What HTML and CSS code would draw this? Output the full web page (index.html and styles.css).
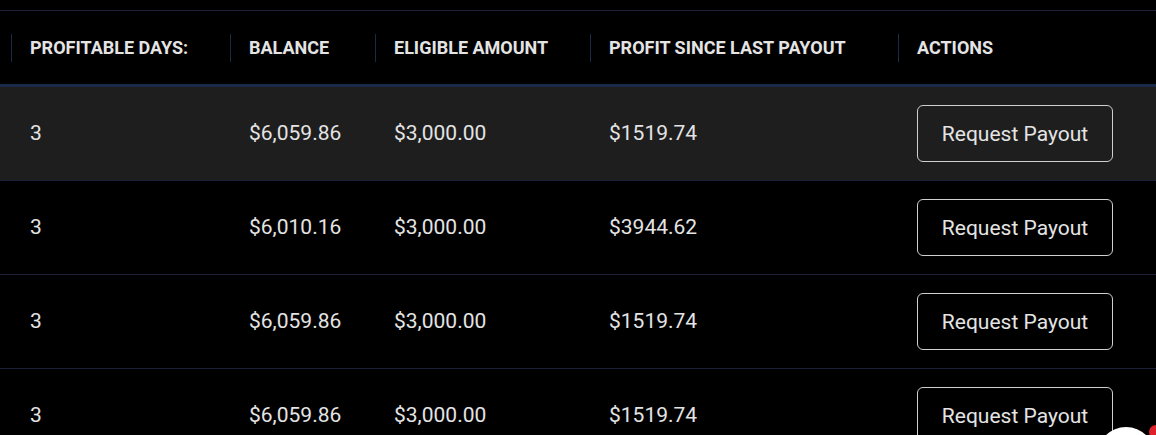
FILE: index.html
```html
<!DOCTYPE html>
<html lang="en">
<head>
  <meta charset="UTF-8">
  <meta name="viewport" content="width=device-width, initial-scale=1">
  <title>Payouts</title>
  <link rel="stylesheet" href="styles.css">
</head>
<body>

  <div class="payouts">
    <div class="row head">
      <div class="cell">Profitable Days:</div>
      <div class="cell">Balance</div>
      <div class="cell">Eligible Amount</div>
      <div class="cell">Profit Since Last Payout</div>
      <div class="cell">Actions</div>
    </div>

    <div class="row hover">
      <div class="cell">3</div>
      <div class="cell">$6,059.86</div>
      <div class="cell">$3,000.00</div>
      <div class="cell">$1519.74</div>
      <div class="cell"><button class="btn">Request Payout</button></div>
    </div>

    <div class="row">
      <div class="cell">3</div>
      <div class="cell">$6,010.16</div>
      <div class="cell">$3,000.00</div>
      <div class="cell">$3944.62</div>
      <div class="cell"><button class="btn">Request Payout</button></div>
    </div>

    <div class="row">
      <div class="cell">3</div>
      <div class="cell">$6,059.86</div>
      <div class="cell">$3,000.00</div>
      <div class="cell">$1519.74</div>
      <div class="cell"><button class="btn">Request Payout</button></div>
    </div>

    <div class="row">
      <div class="cell">3</div>
      <div class="cell">$6,059.86</div>
      <div class="cell">$3,000.00</div>
      <div class="cell">$1519.74</div>
      <div class="cell"><button class="btn">Request Payout</button></div>
    </div>
  </div>

  <!-- chat launcher peeking in from the corner -->
  <div class="chat">
    <span class="chat-dot"></span>
  </div>

</body>
</html>
```

FILE: styles.css
```css
:root {
  --bg: #000;
  --hover: #1e1e1e;
  --text: #e4e4e4;
  --line: #1a2038;
  --line-strong: #1c2a4a;
  --font: "Roboto", "Liberation Sans", sans-serif;
}
*, *::before, *::after { box-sizing: border-box; margin:0; padding:0; }
html, body { height:100%; background:var(--bg); color:var(--text); font:21px/1.2 var(--font); overflow:hidden; }

.payouts { padding-top:10px; }
.row {
  display:grid;
  grid-template-columns: 230px 145px 215px 308px 1fr;
  align-items:center;
  height:94px;
  border-bottom:1px solid var(--line);
}
.row .cell { padding-left:30px; }
.row .cell + .cell { padding-left:19px; }

.head {
  height:77px;
  border-top:1px solid var(--line);
  border-bottom:3px solid var(--line-strong);
  font-size:18px; font-weight:700;
  text-transform:uppercase;
}
.head .cell { border-left:1px solid var(--line-strong); height:28px; display:flex; align-items:center; padding-left:18px; margin-left:11px; }
.head .cell + .cell { margin-left:0; padding-left:18px; }

.hover { background:var(--hover); }

.btn {
  width:196px; height:57px;
  background:transparent;
  color:var(--text);
  border:1px solid #cfcfcf; border-radius:6px;
  font:21px var(--font);
  cursor:pointer;
}

.chat {
  position:fixed; left:1097px; top:427px;
  width:58px; height:58px;
  border-radius:50%;
  background:#fff;
}
.chat-dot {
  position:absolute; left:52px; top:-2px;
  width:14px; height:14px;
  border-radius:50%;
  background:#e0202a;
}
```
